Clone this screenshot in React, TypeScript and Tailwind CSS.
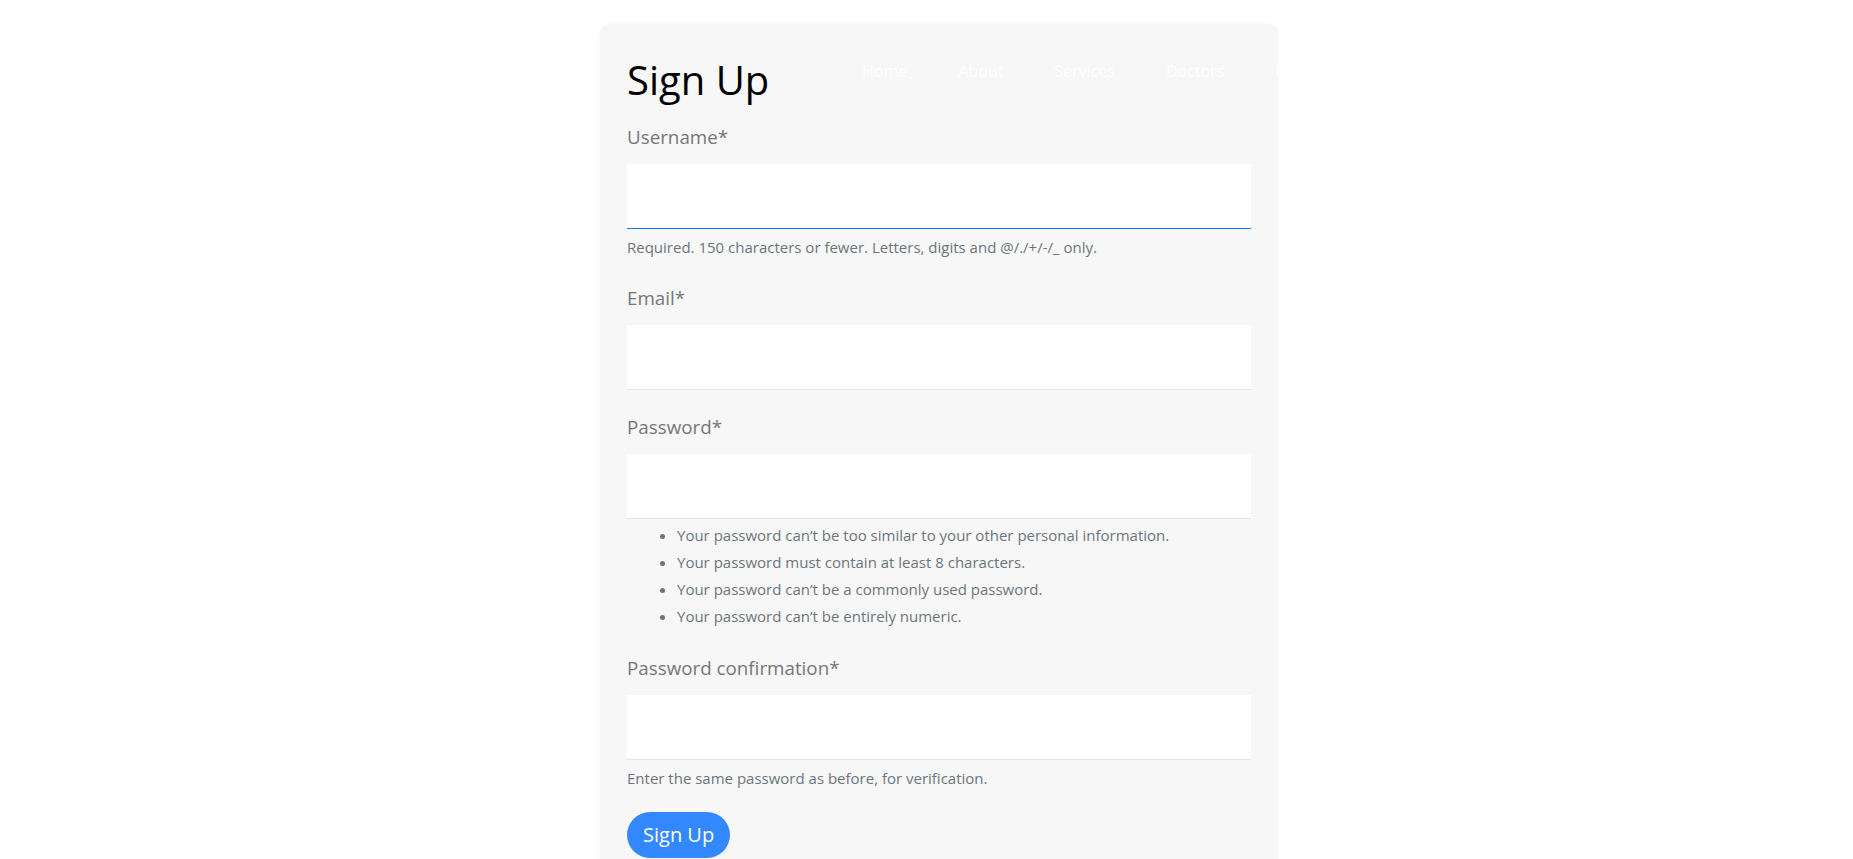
import React from "react";

const navItems = ["Home", "About", "Services", "Doctors", "Blog", "Contact"];

function Label({ children }: { children: React.ReactNode }) {
  return (
    <label className="block text-[18.8px] leading-[28px] text-[#767676] mb-[13px]">
      {children}
    </label>
  );
}

function Input({ focused = false, type = "text" }: { focused?: boolean; type?: string }) {
  return (
    <input
      type={type}
      className={
        focused
          ? "block w-full h-[65px] bg-white border-0 border-b border-solid border-b-[#007bff] outline-none px-3"
          : "block w-full h-[65px] bg-white border-0 border-b border-solid border-b-[#e3e3e3] outline-none px-3"
      }
    />
  );
}

function Help({ children }: { children: React.ReactNode }) {
  return <div className="mt-[6px] text-[15px] leading-[25px] text-[#6c757d]">{children}</div>;
}

export default function App() {
  return (
    <div className="relative min-h-screen bg-white pt-[24px] font-['Open_Sans',sans-serif]">
      <nav className="absolute top-[59px] left-[836.5px] z-10 flex text-[16px] leading-[24px] text-white">
        {navItems.map((item) => (
          <a key={item} className="px-[25.5px]">
            {item}
          </a>
        ))}
      </nav>

      <div className="ml-[600px] w-[678px] rounded-[10px] bg-[#f7f7f7] px-[27px] pt-[32px] pb-[40px] shadow-[0_0_6px_rgba(0,0,0,0.03)]">
        <h1 className="text-[40px] leading-[48px] font-normal text-black">Sign Up</h1>

        <form className="mt-[19px]" onSubmit={(e) => e.preventDefault()}>
          <div className="mb-[24px]">
            <Label>Username*</Label>
            <Input focused />
            <Help>Required. 150 characters or fewer. Letters, digits and @/./+/-/_ only.</Help>
          </div>

          <div className="mb-[23px]">
            <Label>Email*</Label>
            <Input type="email" />
          </div>

          <div className="mb-[24px]">
            <Label>Password*</Label>
            <Input type="password" />
            <ul className="mt-[3px] list-disc pl-[50px] text-[15px] leading-[27px] text-[#6c757d]">
              <li>Your password can’t be too similar to your other personal information.</li>
              <li>Your password must contain at least 8 characters.</li>
              <li>Your password can’t be a commonly used password.</li>
              <li>Your password can’t be entirely numeric.</li>
            </ul>
          </div>

          <div>
            <Label>Password confirmation*</Label>
            <Input type="password" />
            <Help>Enter the same password as before, for verification.</Help>
          </div>

          <button
            type="submit"
            className="mt-[21px] rounded-full bg-[#3388ff] px-4 py-2 text-[20px] leading-[30px] text-white"
          >
            Sign Up
          </button>
        </form>
      </div>
    </div>
  );
}
